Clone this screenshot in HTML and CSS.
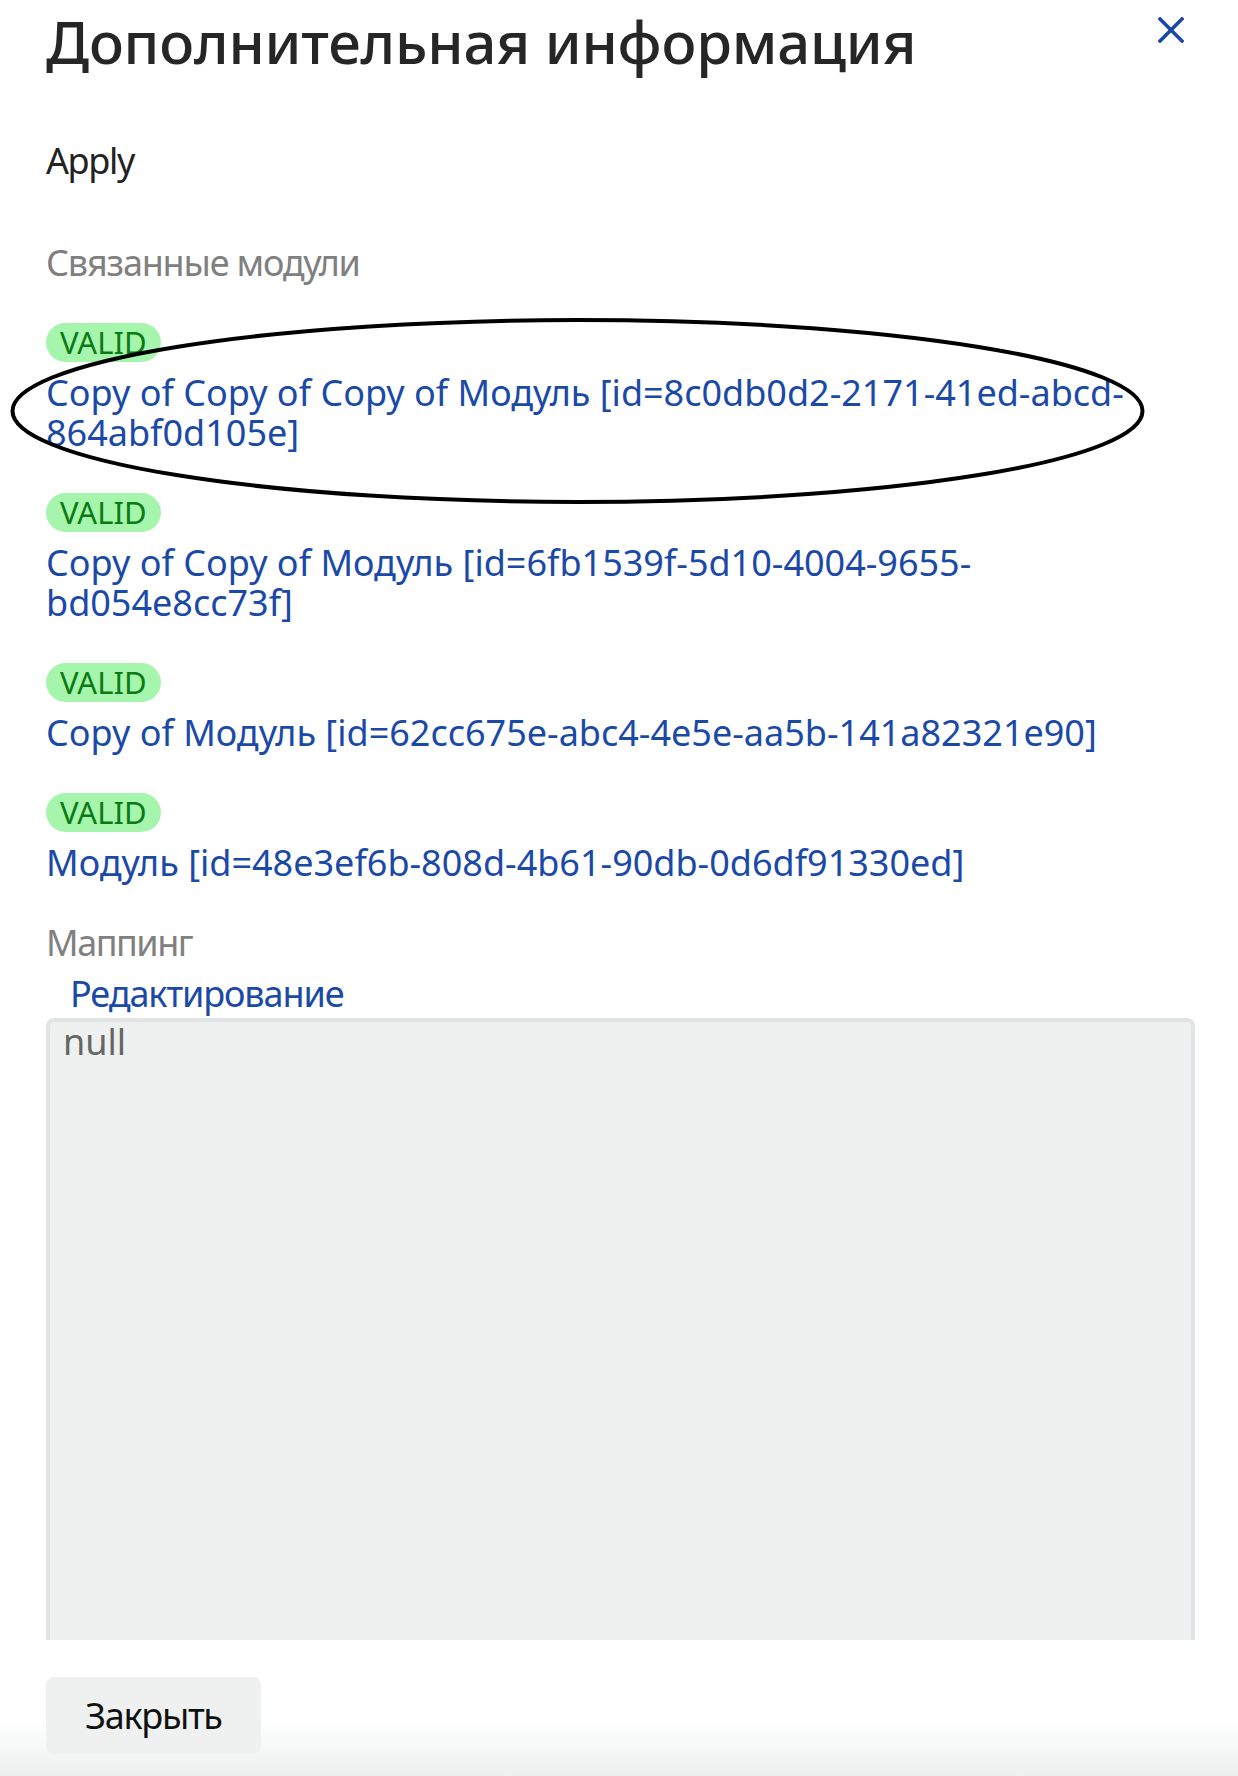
FILE: index.html
```html
<!DOCTYPE html>
<html lang="ru">
<head>
    <meta charset="UTF-8">
    <title>Дополнительная информация</title>
    <link rel="stylesheet" href="styles.css">
</head>
<body>
<div class="modal">
    <div class="modal-header">
        <h1 class="modal-title">Дополнительная информация</h1>
        <button class="close-btn" aria-label="Закрыть">
            <svg width="26" height="26" viewBox="0 0 26 26"><path d="M2 2 L24 24 M24 2 L2 24" stroke="#1a47a8" stroke-width="3.6" stroke-linecap="square" fill="none"/></svg>
        </button>
    </div>

    <div class="modal-body">
        <div class="entity-name">Apply</div>

        <div class="field-label">Связанные модули</div>
        <ul class="modules">
            <li class="module">
                <span class="badge">VALID</span>
                <a class="module-link" href="#">Copy of Copy of Copy of Модуль [id=8c0db0d2-2171-41ed-abcd-864abf0d105e]</a>
            </li>
            <li class="module">
                <span class="badge">VALID</span>
                <a class="module-link" href="#">Copy of Copy of Модуль [id=6fb1539f-5d10-4004-9655-bd054e8cc73f]</a>
            </li>
            <li class="module">
                <span class="badge">VALID</span>
                <a class="module-link" href="#">Copy of Модуль [id=62cc675e-abc4-4e5e-aa5b-141a82321e90]</a>
            </li>
            <li class="module">
                <span class="badge">VALID</span>
                <a class="module-link" href="#">Модуль [id=48e3ef6b-808d-4b61-90db-0d6df91330ed]</a>
            </li>
        </ul>

        <div class="field-label mapping-label">Маппинг</div>
        <a class="edit-link" href="#">Редактирование</a>
        <textarea class="mapping" readonly>null</textarea>
    </div>

    <div class="modal-footer">
        <button class="btn">Закрыть</button>
    </div>

    <!-- hand-drawn highlight over the first module -->
    <svg class="annotation" width="1238" height="520" viewBox="0 0 1238 520">
        <ellipse cx="577.5" cy="411" rx="565" ry="91" fill="none" stroke="#000" stroke-width="4"/>
    </svg>
</div>
</body>
</html>
```

FILE: styles.css
```css
html, body { margin: 0; padding: 0; background: #fff; }
body { font-family: "Noto Sans", "Open Sans", Arial, sans-serif; font-size: 36px; line-height: 40px; color: #222; }

.modal { position: relative; height: 1776px; display: flex; flex-direction: column; overflow: hidden; }

.modal-header { display: flex; justify-content: space-between; align-items: flex-start; padding: 6px 43px 0 46px; }
.modal-title { margin: 0; font-size: 58px; line-height: 72px; font-weight: 500; color: #262626; letter-spacing: -0.2px; }
.close-btn { width: 48px; height: 48px; margin-top: 0; padding: 0; border: none; background: none; display: flex; align-items: center; justify-content: center; cursor: pointer; }

.modal-body { flex: 1; overflow: hidden; padding: 0 43px 0 46px; display: flex; flex-direction: column; align-items: flex-start; }
.entity-name { margin-top: 63px; color: #222; letter-spacing: -1.4px; }
.field-label { margin-top: 62px; color: #808080; letter-spacing: -1.2px; }
.mapping-label { margin-top: 40px; letter-spacing: -1.5px; }

.modules { list-style: none; margin: 40px 0 0; padding: 0; display: flex; flex-direction: column; gap: 40px; }
.module { display: flex; flex-direction: column; align-items: flex-start; gap: 11px; }
.badge { display: inline-block; height: 39px; line-height: 39px; padding: 0 14px; border-radius: 20px; background: #a5f6ac; color: #0c7a14; font-size: 31px; }
.module-link { color: #1a49a8; text-decoration: none; }

.edit-link { margin: 11px 0 0 24px; color: #1a49a8; text-decoration: none; letter-spacing: -1.1px; }

.mapping { display: block; box-sizing: border-box; width: 100%; height: 700px; flex: none; margin-top: 4px; padding: 0 13px; border: 4px solid #e1e4e4; border-radius: 8px; background: #eff1f0; color: #666; font: inherit; resize: none; }

.modal-footer { height: 136px; flex: none; box-sizing: border-box; padding: 37px 46px 0; background: linear-gradient(to bottom, #fff 0, #fff 80px, #edf0ef 136px); }
.btn { width: 215px; height: 77px; border: none; border-radius: 8px; background: #eff1f1; color: #111; font: inherit; letter-spacing: -1.3px; cursor: pointer; }

.annotation { position: absolute; left: 0; top: 0; pointer-events: none; }
```
